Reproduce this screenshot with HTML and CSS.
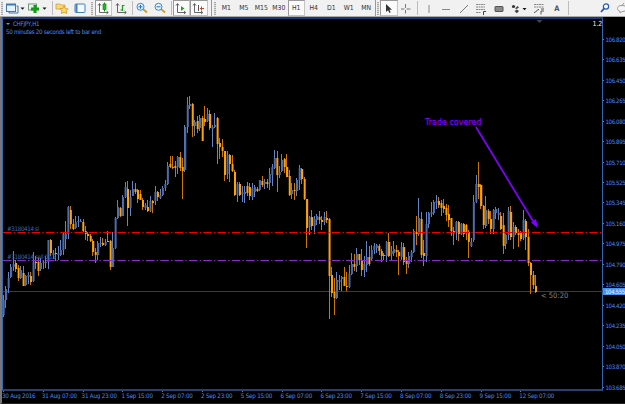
FILE: index.html
```html
<!DOCTYPE html>
<html lang="en">
<head>
  <meta charset="UTF-8" />
  <meta name="viewport" content="width=device-width, initial-scale=1.0"/>
  <title>CHFJPY,H1</title>
  <link rel="stylesheet" href="styles.css">
</head>
<body>

  <div class="toolbar">
    <span class="grip first"></span>
    <button class="tool wide">
      <svg width="20" height="16" viewBox="0 0 20 16"><path d="M4 11v2h9V6h-1.500" fill="none" stroke="#3d78b4"/><rect x="1.500" y="4.500" width="9" height="7" fill="#e4f1fc" stroke="#3d78b4"/><path d="M1 4.500h10" stroke="#3d78b4" stroke-width="2"/><path d="M15.500 7.500h4l-2 2.200z" fill="#111"/></svg>
    </button>
    <button class="tool wide plus">
      <svg width="20" height="16" viewBox="0 0 20 16"><rect x="1.500" y="4" width="8" height="6" fill="#e8f4e8" stroke="#6c9a78"/><path d="M8 5v8M4 9h8" stroke="#119c16" stroke-width="3"/><path d="M15.500 7.500h4l-2 2.200z" fill="#111"/></svg>
    </button>
    <span class="sep"></span>
    <button class="tool">
      <svg width="16" height="16" viewBox="0 0 16 16"><path d="M2 4h4l1 1h4v4H2z" fill="#f7d873" stroke="#c49a35" stroke-width=".7"/><path d="M10 6l1.400 2.500 2.800.4-2 2 .5 2.600-2.700-1.200-2.600 1.200.5-2.700-2-1.900 2.800-.4z" fill="#ffd55c" stroke="#c88e20" stroke-width=".7"/></svg>
    </button>
    <button class="tool">
      <svg width="16" height="16" viewBox="0 0 16 16"><rect x="3" y="4" width="10" height="8.500" rx="1" fill="#f4faff" stroke="#4480bd"/><path d="M4.500 4v8" stroke="#4480bd" stroke-width="2"/></svg>
    </button>
    <span class="grip"></span>
    <button class="tool pressed">
      <svg width="16" height="16" viewBox="0 0 16 16"><path d="M4.500 4v8.500H13M3 5.500l1.500-2L6 5.500M11.500 11l1.800 1.500L11.500 14" fill="none" stroke="#555" stroke-width=".9"/><path d="M9.500 2.500v9" stroke="#118814"/><rect x="8" y="4" width="3" height="5.500" fill="#1ebd24" stroke="#118814" stroke-width=".7"/></svg>
    </button>
    <button class="tool">
      <svg width="16" height="16" viewBox="0 0 16 16"><path d="M4.500 4v8.500H13M3 5.500l1.500-2L6 5.500M11.500 11l1.800 1.500L11.500 14" fill="none" stroke="#555" stroke-width=".9"/><path d="M9.500 5v6M7.500 10h2M9.500 5.500h2" stroke="#189a1b" stroke-width="1.200"/></svg>
    </button>
    <span class="sep"></span>
    <button class="tool">
      <svg width="16" height="16" viewBox="0 0 16 16"><path d="M9 9l4 3.500" stroke="#d0a02c" stroke-width="2"/><circle cx="6.500" cy="6.800" r="3.500" fill="#e3f4ff" stroke="#3c87c8"/><path d="M4.500 6.800h4M6.500 4.800v4" stroke="#2574c0"/></svg>
    </button>
    <button class="tool">
      <svg width="16" height="16" viewBox="0 0 16 16"><path d="M9 9l4 3.500" stroke="#d0a02c" stroke-width="2"/><circle cx="6.500" cy="6.800" r="3.500" fill="#e3f4ff" stroke="#3c87c8"/><path d="M4.500 6.800h4" stroke="#2574c0"/></svg>
    </button>
    <span class="sep"></span>
    <button class="tool pressed">
      <svg width="16" height="16" viewBox="0 0 16 16"><path d="M4.500 4v8.500H12M3 5.500l1.500-2L6 5.500M11 11l1.800 1.500L11 14" fill="none" stroke="#555" stroke-width=".9"/><path d="M8 6v5l3.500-2.500z" fill="#20a623"/></svg>
    </button>
    <button class="tool pressed">
      <svg width="16" height="16" viewBox="0 0 16 16"><path d="M3.500 4v8.500H11M2 5.500l1.500-2L5 5.500M10 11l1.800 1.500L10 14" fill="none" stroke="#555" stroke-width=".9"/><path d="M7.500 5v6" stroke="#555"/><path d="M9 8.500h4M10.500 6.500v4" stroke="#c4442c"/></svg>
    </button>
    <span class="sep end charts-end"></span>
    <span class="grip"></span>
    <button class="tool period">M1</button>
    <button class="tool period">M5</button>
    <button class="tool period">M15</button>
    <button class="tool period">M30</button>
    <button class="tool period pressed">H1</button>
    <button class="tool period">H4</button>
    <button class="tool period">D1</button>
    <button class="tool period">W1</button>
    <button class="tool period">MN</button>
    <span class="sep end"></span>
    <span class="grip tight"></span>
    <button class="tool pressed">
      <svg width="16" height="16" viewBox="0 0 16 16"><path d="M5 4v8l2-1.700L8.500 13l1.200-.7-1.300-2.500H11z" fill="#333"/></svg>
    </button>
    <button class="tool">
      <svg width="16" height="16" viewBox="0 0 16 16"><path d="M7.500 4v4M7.500 10v3.500M3 9h3.500M8.500 9h4" stroke="#777"/></svg>
    </button>
    <span class="sep"></span>
    <button class="tool line-tool">
      <svg width="16" height="16" viewBox="0 0 16 16"><path d="M8 5v8" stroke="#888"/></svg>
    </button>
    <button class="tool">
      <svg width="16" height="16" viewBox="0 0 16 16"><path d="M4 9.500h8" stroke="#888"/></svg>
    </button>
    <button class="tool">
      <svg width="16" height="16" viewBox="0 0 16 16"><path d="M4 13l8-8" stroke="#777"/></svg>
    </button>
    <button class="tool">
      <svg width="16" height="16" viewBox="0 0 16 16"><path d="M3 4.500h9M3 7h9M3 9.500h9M3 12.500h5" stroke="#888" stroke-dasharray="2 .5"/><path d="M10.500 15v-3.500H13" fill="none" stroke="#444"/></svg>
    </button>
    <button class="tool">
      <svg width="16" height="16" viewBox="0 0 16 16"><rect x="4" y="6.500" width="8" height="5" rx=".5" fill="#888" stroke="#555"/></svg>
    </button>
    <button class="tool shapes">
      <svg width="20" height="16" viewBox="0 0 20 16"><circle cx="4.500" cy="6.500" r="1.600" fill="#333"/><path d="M6 8.500l2.500-2.500 1.500 1.500-2.500 1.500zM5.500 11l2.300 2.200 2.200-2.200-2-1.500z" fill="#444"/><path d="M13.500 8h4l-2 2.300z" fill="#111"/></svg>
    </button>
    <button class="tool">
      <svg width="16" height="16" viewBox="0 0 16 16"><path d="M3 4.500h10M3 7h10" stroke="#888" stroke-dasharray="2 .5"/><path d="M3 12.500c3 0 2-3 5-3M10 14.500V11h3M10 9h3" fill="none" stroke="#555"/></svg>
    </button>
    <button class="tool letter">A</button>
    <span class="sep"></span>
    <span class="space"></span>
    <button class="tool">
      <svg width="16" height="16" viewBox="0 0 16 16"><path d="M7.500 8L4 12" stroke="#2357b5" stroke-width="1.800"/><circle cx="9" cy="6.500" r="2.600" fill="#fff" stroke="#2357b5" stroke-width="1.200"/></svg>
    </button>
    <button class="tool">
      <svg width="16" height="16" viewBox="0 0 16 16"><path d="M8 5.500c3 0 4.500 1.200 4.500 3S11 11.500 8 11.500l-2 1.500v-1.800C4.500 10.800 3.500 10 3.500 8.500c0-1.800 1.500-3 4.500-3zM8 5.500L10 3" fill="#f6f6f6" stroke="#999"/></svg>
    </button>
  </div>

  <div class="chart">
    <div class="plot">
      <svg class="candles" id="candles" width="600" height="371" viewBox="3 19 600 371">
        <path d="M536.500 20h6l-3 3z" fill="#444"/>
        <path d="M3 291.500h600" stroke="#3c3c3c"/>
        <g id="bars"></g>
        <path class="level stop-line" d="M3 232.500h600"/>
        <path class="level entry-line" d="M3 260.500h600"/>
        <path d="M476 127l57 94" stroke="#8200ff" stroke-width="1.700"/>
        <path d="M538 228l-7-5.500 5-3.500z" fill="#8200ff"/>
      </svg>
      <div class="info">
        <div><span class="caret"></span>CHFJPY,H1</div>
        <div>50 minutes 20 seconds left to bar end</div>
      </div>
      <div class="version">1.2</div>
      <div class="order stop">#3180414 sl</div>
      <div class="order entry">#3180414 sell 0.15</div>
      <div class="note">Trade covered</div>
      <div class="countdown">&lt; 50:20</div>
    </div>
    <div class="prices">
      <div>106.820</div>
      <div>106.635</div>
      <div>106.450</div>
      <div>106.265</div>
      <div>106.080</div>
      <div>105.895</div>
      <div>105.710</div>
      <div>105.525</div>
      <div>105.345</div>
      <div>105.160</div>
      <div>104.975</div>
      <div>104.790</div>
      <div>104.605</div>
      <div>104.420</div>
      <div>104.235</div>
      <div>104.050</div>
      <div>103.870</div>
      <div>103.685</div>
      <span class="current">104.555</span>
    </div>
    <div class="times">
      <div>30 Aug 2016</div>
      <div>31 Aug 07:00</div>
      <div>31 Aug 23:00</div>
      <div>1 Sep 15:00</div>
      <div>2 Sep 07:00</div>
      <div>2 Sep 23:00</div>
      <div>5 Sep 15:00</div>
      <div>6 Sep 07:00</div>
      <div>6 Sep 23:00</div>
      <div>7 Sep 15:00</div>
      <div>8 Sep 07:00</div>
      <div>8 Sep 23:00</div>
      <div>9 Sep 15:00</div>
      <div>12 Sep 07:00</div>
    </div>
  </div>

  <script src="script.js"></script>
</body>
</html>
```

FILE: styles.css
```css
* {
  box-sizing: border-box;
}
body {
  margin: 0;
  width: 625px;
  height: 404px;
  overflow: hidden;
  display: flex;
  flex-direction: column;
  background: #000;
  font-family: "DejaVu Sans Condensed", "DejaVu Sans", sans-serif;
}
.toolbar {
  display: flex;
  align-items: center;
  height: 17px;
  flex: none;
  background: #f1f1f1;
  border-bottom: 1px solid #aaa;
  overflow: hidden;
}
.tool {
  width: 17.5px;
  height: 16px;
  flex: none;
  display: flex;
  align-items: center;
  justify-content: center;
  padding: 0;
  border: 0;
  background: none;
  color: #333;
  font-family: inherit;
}
.tool svg {
  flex: none;
}
.wide {
  width: 22px;
}
.plus {
  margin-right: 1.5px;
}
.pressed {
  background: #fafafa;
  border: 1px solid #c4c4c4;
  border-top-color: #999;
  border-left-color: #999;
}
.period {
  font-size: 6.8px;
}
.letter {
  font-size: 7.5px;
  font-weight: bold;
  color: #555;
}
.line-tool {
  margin-left: 1px;
}
.shapes {
  width: 23px;
}
.grip {
  width: 2px;
  height: 13px;
  margin: 0 2px;
  flex: none;
  background: repeating-linear-gradient(#aaa 0 1px, #ddd 1px 2px);
}
.grip.first,
.grip.tight {
  margin: 0 1px;
}
.sep {
  width: 1px;
  height: 14px;
  margin: 0 1px 0 2px;
  flex: none;
  background: #bbb;
}
.sep.end {
  height: 16px;
  margin: 0;
  background: #999;
}
.sep.charts-end {
  margin-left: 3px;
}
.space {
  flex: 1;
}
.toolbar > :last-child {
  margin-right: -6px;
}
.chart {
  flex: 1;
  display: grid;
  grid-template-columns: 601px 1fr;
  grid-template-rows: 374px 1fr;
  border-left: 2px solid #777;
  border-bottom: 1px solid #222;
  color: #4b8cf4;
  font-size: 6.2px;
  letter-spacing: -0.2px;
  white-space: nowrap;
}
.plot {
  position: relative;
  border: 1px solid #3566b4;
  border-top: 2px solid #173a78;
  border-bottom: 2px solid #1f417c;
}
.candles {
  display: block;
}
.level {
  fill: none;
  stroke-width: 1;
  stroke-dasharray: 8.5 2.2 1.4 2.2;
}
.stop-line {
  stroke: #f00000;
}
.entry-line {
  stroke: #8c28c8;
}
.info {
  position: absolute;
  left: 3px;
  top: 1px;
  line-height: 8px;
  letter-spacing: -0.3px;
}
.caret {
  display: inline-block;
  margin-right: 3px;
  vertical-align: 1px;
  border: 2px solid transparent;
  border-top: 2.5px solid #4b9cff;
  border-bottom: 0;
}
.version {
  position: absolute;
  right: 0;
  top: 1px;
  color: #eee;
  font-size: 7px;
  line-height: 9px;
}
.order {
  position: absolute;
  left: 4px;
  line-height: 8px;
  letter-spacing: -0.35px;
  color: #3769b8;
}
.stop {
  top: 206px;
}
.entry {
  top: 234px;
}
.note {
  position: absolute;
  left: 422px;
  top: 98px;
  color: #8200ff;
  font-family: "DejaVu Sans", sans-serif;
  font-size: 8px;
  line-height: 11px;
  letter-spacing: 0;
  -webkit-text-stroke: 0.2px #8200ff;
}
.countdown {
  position: absolute;
  left: 538px;
  top: 272px;
  color: #858585;
  font-size: 7.5px;
  line-height: 10px;
  letter-spacing: 0;
}
.prices {
  position: relative;
  padding-top: 12px;
  height: 384px;
  font-size: 6px;
  letter-spacing: -0.35px;
}
.prices div {
  display: flex;
  align-items: center;
  height: 20.47px;
}
.prices div::before {
  content: "";
  width: 1px;
  height: 1px;
  margin-right: 1.5px;
  background: #4b86e8;
}
.current {
  position: absolute;
  left: 0;
  top: 271px;
  width: 22px;
  padding-left: 2px;
  line-height: 7px;
  background: #4a90ef;
  color: #e8f4ff;
}
.times {
  display: flex;
  line-height: 8px;
}
.times div {
  width: 39.8px;
  flex: none;
}
.times div::before {
  content: "";
  display: block;
  width: 1px;
  height: 2px;
  margin: -1px 0 0 1px;
  background: #4b86e8;
}
```

FILE: script.js
```js
// one row per 16 bars, each bar: high low bodyTop bodyBottom up/down
const rows = [
  "295 317 300 315 u,286 308 289 300 u,272 293 278 288 u,264 278 267 277 u,251 271 264 267 u,260 272 263 269 d,265 281 268 278 d,266 279 270 278 u,266 286 273 286 d,275 286 276 285 u,272 284 275 277 u,272 285 276 282 d,252 282 262 281 u,256 269 262 263 d,258 276 262 271 d,258 271 263 269 u",
  "260 269 262 263 u,256 268 262 263 u,240 269 240 262 u,239 256 240 253 d,250 259 253 255 u,248 261 253 254 d,246 260 253 255 u,240 256 250 255 u,232 255 234 250 u,221 249 234 239 u,206 239 207 234 u,206 229 210 224 d,219 230 224 229 d,216 229 222 228 u,216 227 221 222 u,219 222 221 222 u",
  "219 232 222 231 d,226 240 231 234 d,232 241 234 236 d,234 242 236 241 d,239 256 241 252 d,248 263 252 255 d,241 260 243 255 u,237 247 243 244 u,238 246 243 245 d,239 246 242 245 u,231 242 241 242 d,240 270 241 267 d,232 267 248 267 u,217 249 218 248 u,200 219 207 218 u,207 217 208 216 d",
  "195 216 197 216 u,182 198 187 197 u,181 226 189 208 d,190 216 197 208 u,181 196 189 196 u,183 194 189 192 d,189 203 190 199 d,190 200 194 200 d,198 210 200 207 d,203 210 205 208 u,200 212 207 211 d,196 212 201 211 u,200 213 201 203 d,186 205 192 201 u,191 201 192 197 d,189 199 195 198 u",
  "186 196 188 195 u,180 191 184 188 u,162 185 166 184 u,156 168 164 167 d,156 169 167 168 d,161 177 166 168 d,156 174 157 167 u,152 171 157 168 d,158 199 167 171 d,125 172 127 170 u,97 133 105 127 u,96 109 104 106 u,103 137 104 126 d,120 136 122 126 u,116 133 121 129 d,115 131 118 128 u",
  "116 141 118 141 d,106 126 119 122 d,108 122 114 121 u,110 130 114 128 d,125 147 127 129 u,113 128 125 127 u,117 164 118 144 d,138 159 143 147 d,139 157 147 151 d,151 181 151 175 d,151 179 155 174 u,154 182 155 164 d,155 172 164 171 d,170 196 172 195 d,182 202 184 195 u,182 196 184 195 d",
  "186 202 192 194 u,186 203 192 194 u,182 196 186 193 d,183 200 187 196 d,183 200 188 197 u,185 197 187 192 u,187 192 189 191 d,180 191 180 190 u,176 187 181 185 d,179 189 182 184 u,179 188 182 184 d,168 190 174 183 u,164 186 167 175 u,150 169 158 168 u,151 192 158 175 d,166 178 172 175 u",
  "154 172 160 171 u,158 173 159 167 d,154 177 167 177 d,170 196 176 195 d,183 199 190 194 u,183 200 190 191 d,178 196 180 191 u,165 190 168 180 u,168 184 169 179 d,177 200 179 199 d,199 248 199 228 d,216 235 217 227 u,210 230 217 226 d,216 234 219 226 u,214 225 216 220 u,211 224 217 220 d",
  "216 230 220 222 d,212 225 217 222 u,211 223 218 220 d,218 319 219 276 d,267 297 275 293 d,278 315 292 298 d,272 299 280 298 u,275 290 280 282 u,276 291 277 279 u,267 286 277 286 d,272 291 286 287 d,265 288 274 287 u,253 275 264 274 u,254 271 264 267 d,248 272 254 266 u,254 265 254 260 d",
  "249 276 260 270 d,256 277 264 270 u,241 272 257 265 u,246 266 257 264 d,245 261 250 259 u,243 254 246 250 u,244 253 245 248 u,244 255 246 251 d,249 262 251 256 d,253 260 255 256 d,241 262 242 256 u,233 257 242 256 d,246 260 251 254 u,241 256 249 253 u,245 257 250 252 d,250 275 252 256 d",
  "242 260 247 257 u,243 265 247 262 d,257 274 260 264 d,252 268 256 264 u,250 262 252 257 u,229 253 231 252 u,216 245 232 234 d,198 236 218 234 u,212 258 219 255 d,240 266 253 256 d,212 262 224 256 u,212 228 213 224 u,202 217 212 214 u,200 215 202 213 u,195 209 201 203 u,197 208 201 205 d",
  "200 216 203 208 d,199 213 206 209 d,204 221 208 215 d,205 227 214 220 d,218 236 218 231 d,227 245 231 233 d,221 240 222 232 u,221 241 222 234 d,223 235 224 234 u,223 237 224 234 d,224 240 225 232 d,230 258 232 242 d,238 247 242 246 u,195 242 202 240 u,175 203 184 202 u,162 199 184 187 d",
  "184 209 185 206 d,205 229 206 225 d,196 228 210 226 u,209 224 211 219 d,211 234 219 229 d,209 234 210 229 u,207 219 209 213 u,208 220 213 215 u,212 230 216 229 d,213 254 225 246 d,234 249 235 244 u,207 240 211 235 u,206 240 212 237 d,222 249 227 237 u,225 235 227 233 d,229 247 233 235 d",
  "231 241 233 239 d,210 240 220 238 u,219 250 221 237 d,229 266 237 263 d,262 294 263 275 d,271 289 275 285 d,275 293 286 292 d"
];

const colors = {
  u: { wick: "#6484c8", body: "#4d6cab" },
  d: { wick: "#cf7600", body: "#ffa20a" }
};

function rect(x, y, w, h, fill) {
  return `<rect x="${x}" y="${y}" width="${w}" height="${h}" fill="${fill}"/>`;
}

let out = "";
rows.forEach((row, r) => {
  row.split(",").forEach((bar, i) => {
    const [high, low, top, bottom, dir] = bar.split(" ");
    const x = 3.4 + r * 39.8 + i * 2.4875;
    const c = colors[dir];
    out += rect(Math.floor(x), high, 1, low - high, c.wick);
    out += rect((x - 0.7).toFixed(2), top, 2, Math.max(bottom - top, 1), c.body);
  });
});
document.getElementById("bars").innerHTML = out;
```
